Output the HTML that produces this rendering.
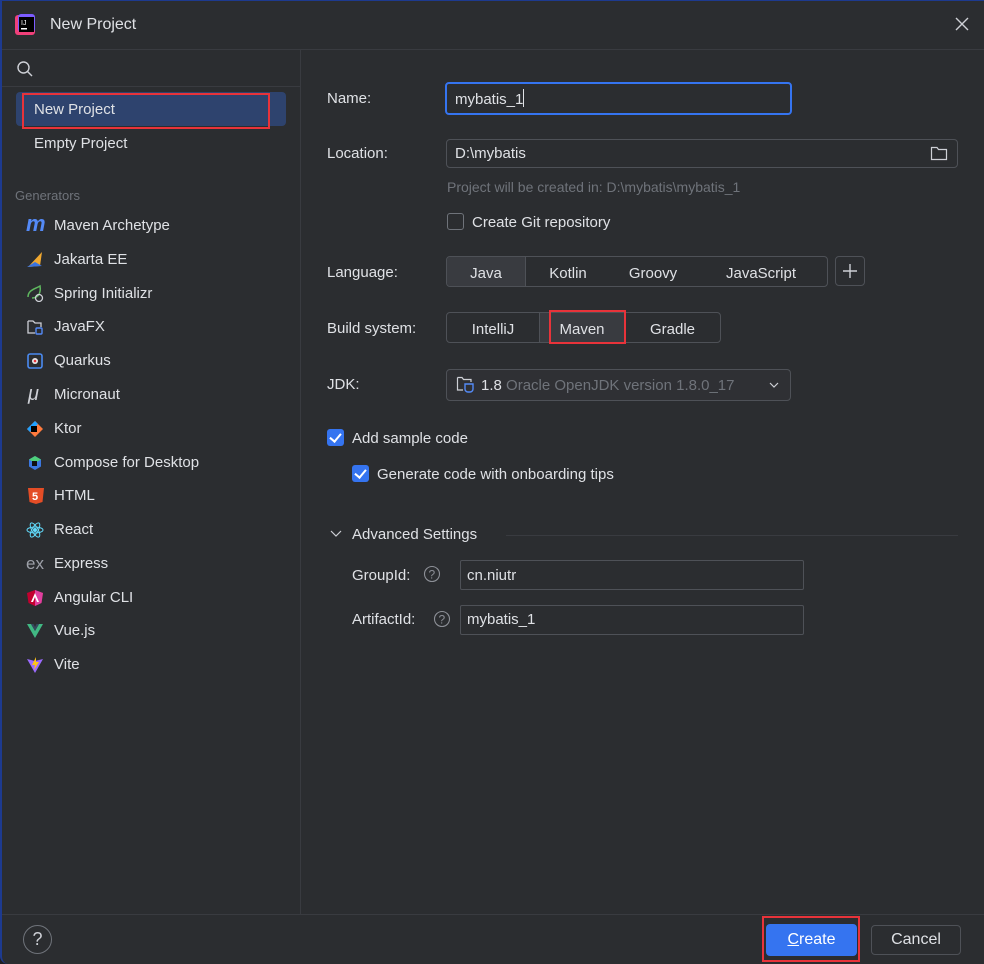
<!DOCTYPE html>
<html><head><meta charset="utf-8"><style>
*{margin:0;padding:0;box-sizing:border-box}
body{width:984px;height:964px;background:#1e1f22;font-family:"Liberation Sans",sans-serif;font-size:15px;color:#dfe1e5;overflow:hidden;position:relative}
.win{position:absolute;left:0;top:0;width:984px;height:964px;background:#2b2d30;border-bottom-left-radius:8px;overflow:hidden}
.frame{position:absolute;left:0;top:0;width:984px;height:964px;border-left:2px solid #1d3a8f;border-top:1px solid #1d3a8f;border-bottom-left-radius:8px}
.a{position:absolute;white-space:nowrap;line-height:20px}
.line{position:absolute;background:#393b40}
.box{position:absolute;border:1px solid #4e5157;border-radius:4px}
.ic{position:absolute;width:18px;height:18px}
.seg{position:absolute;border:1px solid #4e5157;border-radius:4px;display:flex}
.seg div{text-align:center;line-height:29px;padding-top:2px}
.cb{position:absolute;width:17px;height:17px;border-radius:3px;background:#3574f0}
.cb:after{content:"";position:absolute;left:5px;top:2px;width:5px;height:9px;border:solid #fff;border-width:0 2px 2px 0;transform:rotate(40deg)}
.red{position:absolute;border:2px solid #e8333a}
</style></head><body><div class="win">
<svg style="position:absolute;left:15px;top:14px" width="22" height="22" viewBox="0 0 22 22"><rect x="0" y="1" width="20" height="20" rx="3" fill="#f0407a"/><rect x="3" y="0" width="17" height="18" rx="3" fill="#7c5cff"/><rect x="4" y="3" width="15" height="15" fill="#000"/><text x="6" y="11" font-size="7" fill="#fff" font-family="Liberation Sans">IJ</text><rect x="6" y="14" width="6" height="1.5" fill="#fff"/></svg>
<div class="a" style="left:50px;top:15px;font-size:16px">New Project</div>
<svg style="position:absolute;left:955px;top:17px" width="14" height="14"><path d="M1 1L13 13M13 1L1 13" stroke="#ced0d6" stroke-width="1.4"/></svg>
<div class="line" style="left:0;top:49px;width:984px;height:1px"></div>
<div class="line" style="left:300px;top:50px;width:1px;height:864px"></div>
<svg style="position:absolute;left:16px;top:60px" width="18" height="18"><circle cx="7.5" cy="7.5" r="5.5" fill="none" stroke="#ced0d6" stroke-width="1.4"/><path d="M11.5 11.5L16 16" stroke="#ced0d6" stroke-width="1.4"/></svg>
<div class="line" style="left:0;top:86px;width:300px;height:1px"></div>
<div style="position:absolute;left:16px;top:92px;width:270px;height:34px;background:#2e436e;border-radius:4px"></div>
<div class="red" style="left:22px;top:93px;width:248px;height:36px"></div>
<div class="a" style="left:34px;top:100px">New Project</div>
<div class="a" style="left:34px;top:134px">Empty Project</div>
<div class="a" style="left:15px;top:186px;font-size:13px;color:#6f737a">Generators</div>
<div class="a" style="left:26px;top:214px;color:#548af7;font-style:italic;font-size:22px;font-weight:bold">m</div>
<svg class="ic" style="left:26px;top:250px" viewBox="0 0 18 18"><path d="M2 17L16 2L14 16Z" fill="#f0a830"/><path d="M1 17L9 12L16 16Z" fill="#3a74e0"/></svg>
<svg class="ic" style="left:26px;top:284px" viewBox="0 0 18 18"><path d="M2 13C2 6 9 5 14 2C15 8 13 14 6 14" fill="none" stroke="#5fb85f" stroke-width="1.5"/><circle cx="13" cy="14" r="3.5" fill="none" stroke="#ced0d6" stroke-width="1.3"/></svg>
<svg class="ic" style="left:26px;top:318px" viewBox="0 0 18 18"><path d="M2 3H7L9 5H15V9M2 3V15H9" fill="none" stroke="#ced0d6" stroke-width="1.3"/><rect x="10" y="10" width="6" height="6" rx="1" fill="none" stroke="#548af7" stroke-width="1.4"/></svg>
<svg class="ic" style="left:26px;top:352px" viewBox="0 0 18 18"><rect x="2" y="2" width="14" height="14" rx="2" fill="none" stroke="#4a8af0" stroke-width="1.6"/><circle cx="9" cy="9" r="3" fill="#e8e8e8"/><circle cx="9" cy="9" r="1.3" fill="#e8333a"/></svg>
<div class="a" style="left:28px;top:384px;font-size:20px;font-style:italic;color:#ced0d6">μ</div>
<svg class="ic" style="left:26px;top:420px" viewBox="0 0 18 18"><path d="M9 1L17 9L9 17L1 9Z" fill="#ff7a3d"/><path d="M1 9L9 1L12 4L4 12Z" fill="#1ea0ff"/><rect x="5" y="6" width="6" height="6" fill="#000"/></svg>
<svg class="ic" style="left:26px;top:454px" viewBox="0 0 18 18"><path d="M9 2L15 5.5V12.5L9 16L3 12.5V5.5Z" fill="#3b78e0"/><path d="M9 2L15 5.5L9 9L3 5.5Z" fill="#4ed07a"/><rect x="6" y="7" width="5" height="5" fill="#111"/></svg>
<svg class="ic" style="left:27px;top:487px" viewBox="0 0 18 18"><path d="M1 1H17L15.5 15L9 17L2.5 15Z" fill="#e44d26"/><text x="5" y="13" font-size="11" font-weight="bold" fill="#fff" font-family="Liberation Sans">5</text></svg>
<svg class="ic" style="left:26px;top:521px" viewBox="0 0 18 18" fill="none" stroke="#61dafb" stroke-width="1"><ellipse cx="9" cy="9" rx="8" ry="3"/><ellipse cx="9" cy="9" rx="8" ry="3" transform="rotate(60 9 9)"/><ellipse cx="9" cy="9" rx="8" ry="3" transform="rotate(120 9 9)"/><circle cx="9" cy="9" r="1.5" fill="#61dafb"/></svg>
<div class="a" style="left:26px;top:554px;color:#9da0a8;font-size:17px">ex</div>
<svg class="ic" style="left:26px;top:589px" viewBox="0 0 18 18"><path d="M9 1L17 4L15.5 14L9 17L2.5 14L1 4Z" fill="#c3002f"/><path d="M9 1L17 4L15.5 14L9 17Z" fill="#e040a0"/><path d="M9 4L5 13H7L9 8L11 13H13Z" fill="#fff"/></svg>
<svg class="ic" style="left:26px;top:622px" viewBox="0 0 18 18"><path d="M1 2H5L9 9L13 2H17L9 16Z" fill="#41b883"/><path d="M5 2H7.5L9 5L10.5 2H13L9 9Z" fill="#35495e"/></svg>
<svg class="ic" style="left:26px;top:656px" viewBox="0 0 18 18"><path d="M1 3L9 5L17 3L9 17Z" fill="#9c6bff"/><path d="M10 1L6 9H9L8 14L13 6H10Z" fill="#ffc517"/></svg>
<div class="a" style="left:54px;top:216px">Maven Archetype</div>
<div class="a" style="left:54px;top:250px">Jakarta EE</div>
<div class="a" style="left:54px;top:284px">Spring Initializr</div>
<div class="a" style="left:54px;top:317px">JavaFX</div>
<div class="a" style="left:54px;top:351px">Quarkus</div>
<div class="a" style="left:54px;top:385px">Micronaut</div>
<div class="a" style="left:54px;top:419px">Ktor</div>
<div class="a" style="left:54px;top:453px">Compose for Desktop</div>
<div class="a" style="left:54px;top:486px">HTML</div>
<div class="a" style="left:54px;top:520px">React</div>
<div class="a" style="left:54px;top:554px">Express</div>
<div class="a" style="left:54px;top:588px">Angular CLI</div>
<div class="a" style="left:54px;top:621px">Vue.js</div>
<div class="a" style="left:54px;top:655px">Vite</div>
<div class="a" style="left:327px;top:89px">Name:</div>
<div class="box" style="left:445px;top:82px;width:347px;height:33px;border:2px solid #3574f0"></div>
<div class="a" style="left:455px;top:89px">mybatis_1<span style="display:inline-block;width:1px;height:18px;background:#dfe1e5;vertical-align:-3px"></span></div>
<div class="a" style="left:327px;top:144px">Location:</div>
<div class="box" style="left:446px;top:139px;width:512px;height:29px"></div>
<div class="a" style="left:455px;top:144px">D:\mybatis</div>
<svg style="position:absolute;left:930px;top:145px" width="18" height="16"><path d="M1.5 2.5H7L8.5 4.5H16.5V14.5H1.5Z" fill="none" stroke="#ced0d6" stroke-width="1.2"/></svg>
<div class="a" style="left:447px;top:177px;font-size:14px;color:#6f737a">Project will be created in: D:\mybatis\mybatis_1</div>
<div style="position:absolute;left:447px;top:213px;width:17px;height:17px;border:1px solid #6f737a;border-radius:3px"></div>
<div class="a" style="left:472px;top:213px">Create Git repository</div>
<div class="a" style="left:327px;top:263px">Language:</div>
<div class="seg" style="left:446px;top:256px;width:382px;height:31px"><div style="width:79px;background:#393b40;border-right:1px solid #4e5157;border-radius:3px 0 0 3px">Java</div><div style="width:84px">Kotlin</div><div style="width:86px">Groovy</div><div style="width:130px">JavaScript</div></div>
<div class="box" style="left:835px;top:256px;width:30px;height:30px"></div>
<svg style="position:absolute;left:842px;top:263px" width="16" height="16"><path d="M8 1V15M1 8H15" stroke="#ced0d6" stroke-width="1.4"/></svg>
<div class="a" style="left:327px;top:319px">Build system:</div>
<div class="seg" style="left:446px;top:312px;width:275px;height:31px"><div style="width:92px">IntelliJ</div><div style="width:86px;background:#393b40;border-left:1px solid #4e5157;border-right:1px solid #4e5157">Maven</div><div style="width:95px">Gradle</div></div>
<div class="red" style="left:549px;top:310px;width:77px;height:34px"></div>
<div class="a" style="left:327px;top:375px">JDK:</div>
<div class="box" style="left:446px;top:369px;width:345px;height:32px;background:#2f3034"></div>
<svg style="position:absolute;left:456px;top:375px" width="22" height="20"><path d="M1.5 2.5H6L7.5 4.5H15V7M1.5 2.5V15H7" fill="none" stroke="#ced0d6" stroke-width="1.2"/><path d="M9 9H17V14A3 3 0 0 1 14 17H12A3 3 0 0 1 9 14Z" fill="none" stroke="#548af7" stroke-width="1.4"/></svg>
<div class="a" style="left:481px;top:376px"><span>1.8</span> <span style="color:#6f737a">Oracle OpenJDK version 1.8.0_17</span></div>
<svg style="position:absolute;left:769px;top:381px" width="10" height="8"><path d="M1 2L5 6L9 2" fill="none" stroke="#ced0d6" stroke-width="1.2"/></svg>
<div class="cb" style="left:327px;top:429px"></div>
<div class="a" style="left:352px;top:429px">Add sample code</div>
<div class="cb" style="left:352px;top:465px"></div>
<div class="a" style="left:377px;top:465px">Generate code with onboarding tips</div>
<svg style="position:absolute;left:330px;top:530px" width="12" height="8"><path d="M1 1L6 6L11 1" fill="none" stroke="#ced0d6" stroke-width="1.2"/></svg>
<div class="a" style="left:352px;top:525px">Advanced Settings</div>
<div class="line" style="left:506px;top:535px;width:452px;height:1px"></div>
<div class="a" style="left:352px;top:566px">GroupId:</div>
<svg style="position:absolute;left:423px;top:565px" width="18" height="18"><circle cx="9" cy="9" r="7.5" fill="none" stroke="#8c8f96" stroke-width="1.1"/><text x="5.5" y="13.5" font-size="12" fill="#8c8f96" font-family="Liberation Sans">?</text></svg>
<div class="box" style="left:460px;top:560px;width:344px;height:30px;border-radius:2px"></div>
<div class="a" style="left:467px;top:566px">cn.niutr</div>
<div class="a" style="left:352px;top:610px">ArtifactId:</div>
<svg style="position:absolute;left:433px;top:610px" width="18" height="18"><circle cx="9" cy="9" r="7.5" fill="none" stroke="#8c8f96" stroke-width="1.1"/><text x="5.5" y="13.5" font-size="12" fill="#8c8f96" font-family="Liberation Sans">?</text></svg>
<div class="box" style="left:460px;top:605px;width:344px;height:30px;border-radius:2px"></div>
<div class="a" style="left:467px;top:610px">mybatis_1</div>
<div class="line" style="left:0;top:914px;width:984px;height:1px"></div>
<div style="position:absolute;left:23px;top:925px;width:29px;height:29px;border:1px solid #6f737a;border-radius:50%;text-align:center;line-height:27px;font-size:18px;color:#ced0d6">?</div>
<div style="position:absolute;left:766px;top:924px;width:91px;height:32px;background:#3574f0;border-radius:4px;text-align:center;line-height:32px;font-size:16px;color:#fff"><u>C</u>reate</div>
<div class="red" style="left:762px;top:916px;width:98px;height:46px"></div>
<div style="position:absolute;left:871px;top:925px;width:90px;height:30px;border:1px solid #4e5157;border-radius:4px;text-align:center;line-height:28px;font-size:16px">Cancel</div>
</div><div class="frame"></div></body></html>
